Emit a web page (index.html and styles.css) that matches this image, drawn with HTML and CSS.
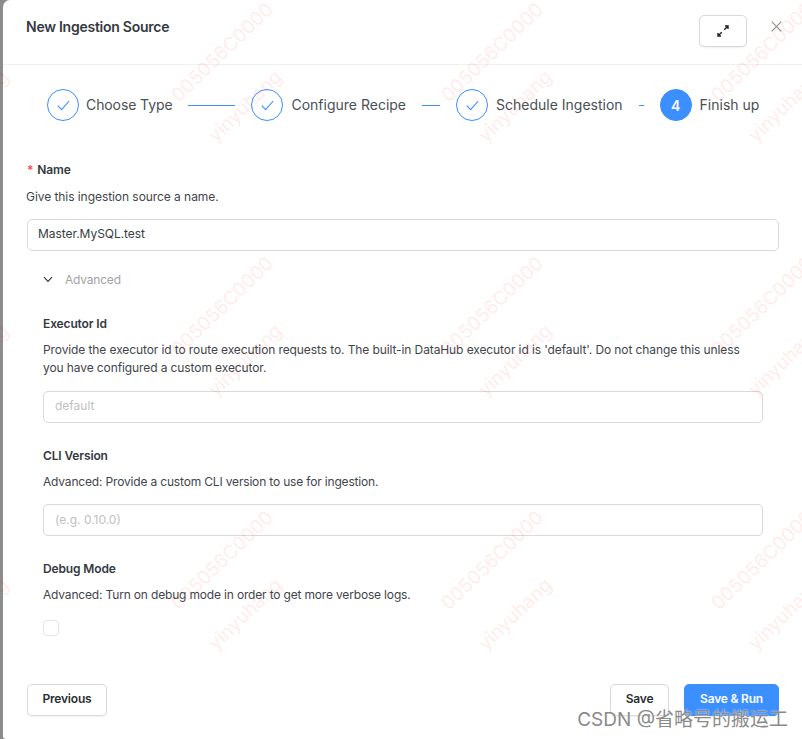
FILE: index.html

```html
<!DOCTYPE html>
<html lang="en">
<head>
  <meta charset="UTF-8">
  <title>New Ingestion Source</title>
  <link rel="stylesheet" href="styles.css">
</head>
<body>
  <div class="modal">
    <div class="modal-header">
      <div class="modal-title">New Ingestion Source</div>
      <button class="expand-btn">
        <svg width="16" height="16" viewBox="0 0 16 16"><path d="M9.2 6.8 12.6 3.4M10 3h3v3M6.8 9.2 3.4 12.6M3 10v3h3" fill="none" stroke="#222" stroke-width="1.4"/></svg>
      </button>
      <svg class="close-icon" width="11" height="11" viewBox="0 0 11 11"><path d="M.7.7 10.3 10.3M10.3.7.7 10.3" stroke="#8c8c8c" stroke-width="1.1"/></svg>
    </div>

    <div class="steps">
      <div class="step">
        <span class="step-circle"><svg width="13" height="11" viewBox="0 0 13 11"><path d="M.8 5.6 4.6 9.6 12.2 1" fill="none" stroke="#3b8fff" stroke-width="1.1"/></svg></span>
        <span class="step-label">Choose Type</span>
      </div>
      <div class="step-line line-1"></div>
      <div class="step">
        <span class="step-circle"><svg width="13" height="11" viewBox="0 0 13 11"><path d="M.8 5.6 4.6 9.6 12.2 1" fill="none" stroke="#3b8fff" stroke-width="1.1"/></svg></span>
        <span class="step-label">Configure Recipe</span>
      </div>
      <div class="step-line line-2"></div>
      <div class="step">
        <span class="step-circle"><svg width="13" height="11" viewBox="0 0 13 11"><path d="M.8 5.6 4.6 9.6 12.2 1" fill="none" stroke="#3b8fff" stroke-width="1.1"/></svg></span>
        <span class="step-label">Schedule Ingestion</span>
      </div>
      <div class="step-line line-3"></div>
      <div class="step">
        <span class="step-circle current">4</span>
        <span class="step-label">Finish up</span>
      </div>
    </div>

    <div class="form">
      <div class="label"><span class="required">*</span>Name</div>
      <div class="help name-help">Give this ingestion source a name.</div>
      <div class="input name-input">Master.MySQL.test</div>

      <div class="advanced-toggle">
        <svg width="10" height="7" viewBox="0 0 10 7"><path d="M1 1.2 5 5.4 9 1.2" fill="none" stroke="#333" stroke-width="1.1"/></svg>
        <span>Advanced</span>
      </div>

      <div class="advanced">
        <div class="label">Executor Id</div>
        <div class="help">Provide the executor id to route execution requests to. The built-in DataHub executor id is 'default'. Do not change this unless you have configured a custom executor.</div>
        <div class="input placeholder">default</div>

        <div class="label">CLI Version</div>
        <div class="help narrow">Advanced: Provide a custom CLI version to use for ingestion.</div>
        <div class="input placeholder cli-input">(e.g. 0.10.0)</div>

        <div class="label">Debug Mode</div>
        <div class="help narrow">Advanced: Turn on debug mode in order to get more verbose logs.</div>
        <div class="checkbox"></div>
      </div>
    </div>

    <div class="modal-footer">
      <button class="btn prev-btn">Previous</button>
      <button class="btn save-btn">Save</button>
      <button class="btn primary">Save &amp; Run</button>
    </div>
  </div>

  <svg class="watermark" width="802" height="739">
    <g>
      <text transform="translate(179 103) rotate(-44)">005056C0000</text>
      <text transform="translate(449 103) rotate(-44)">005056C0000</text>
      <text transform="translate(719 103) rotate(-44)">005056C0000</text>
      <text transform="translate(179 357) rotate(-44)">005056C0000</text>
      <text transform="translate(449 357) rotate(-44)">005056C0000</text>
      <text transform="translate(719 357) rotate(-44)">005056C0000</text>
      <text transform="translate(179 611) rotate(-44)">005056C0000</text>
      <text transform="translate(449 611) rotate(-44)">005056C0000</text>
      <text transform="translate(719 611) rotate(-44)">005056C0000</text>
    </g>
    <g>
      <text transform="translate(-57 143) rotate(-44)">yinyuhang</text>
      <text transform="translate(216 143) rotate(-44)">yinyuhang</text>
      <text transform="translate(486 143) rotate(-44)">yinyuhang</text>
      <text transform="translate(756 143) rotate(-44)">yinyuhang</text>
      <text transform="translate(-57 397) rotate(-44)">yinyuhang</text>
      <text transform="translate(216 397) rotate(-44)">yinyuhang</text>
      <text transform="translate(486 397) rotate(-44)">yinyuhang</text>
      <text transform="translate(756 397) rotate(-44)">yinyuhang</text>
      <text transform="translate(-57 651) rotate(-44)">yinyuhang</text>
      <text transform="translate(216 651) rotate(-44)">yinyuhang</text>
      <text transform="translate(486 651) rotate(-44)">yinyuhang</text>
      <text transform="translate(756 651) rotate(-44)">yinyuhang</text>
    </g>
  </svg>
  <div class="csdn-mark">CSDN @省略号的搬运工</div>
</body>
</html>
```

FILE: styles.css

```css
* {
  box-sizing: border-box;
}
html, body {
  height: 100%;
}
body {
  margin: 0;
  background: #8c8c8c;
  color: #373d44;
  font-family: Inter, "Noto Sans CJK SC", sans-serif;
  font-size: 12px;
  overflow: hidden;
}
.modal {
  display: flex;
  flex-direction: column;
  height: 739px;
  margin-left: 3px;
  padding-bottom: 23px;
  background: #fff;
  border-radius: 7px 0 0 3px;
}
.modal-header {
  display: flex;
  align-items: center;
  height: 65px;
  padding: 0 20px 0 23px;
  border-bottom: 1px solid #f0f0f0;
}
.modal-title {
  flex: 1;
  margin-top: -12px;
  font-size: 14px;
  font-weight: 600;
  letter-spacing: -0.25px;
  color: #33393f;
}
.expand-btn {
  display: flex;
  align-items: center;
  justify-content: center;
  width: 48px;
  height: 32px;
  margin: -3px 24px 0 0;
  background: #fff;
  border: 1px solid #d9d9d9;
  border-radius: 5px;
  box-shadow: 0 1px 2px rgba(0, 0, 0, 0.06);
}
.close-icon {
  margin-top: -11px;
}

.steps {
  display: flex;
  align-items: center;
  height: 32px;
  margin: 24px 0 0 44px;
}
.step {
  display: flex;
  align-items: center;
  gap: 8px;
}
.step:first-child {
  gap: 7px;
  letter-spacing: -0.1px;
}
.step-circle {
  display: flex;
  align-items: center;
  justify-content: center;
  width: 32px;
  height: 32px;
  border: 1px solid #3b8fff;
  border-radius: 50%;
}
.step-circle.current {
  background: #3b8fff;
  color: #fff;
  font-size: 14px;
  font-weight: 600;
}
.step-label {
  margin-top: -2px;
  font-size: 14px;
  color: #4a4f55;
  white-space: nowrap;
}
.step-line {
  height: 1px;
  margin: 0 16px;
  background: #3b8fff;
}
.line-1 {
  width: 47px;
}
.line-2 {
  width: 18px;
}
.line-3 {
  width: 5px;
}

.form {
  margin: 0 23px 0 24px;
  padding-top: 40px;
}
.label {
  height: 18px;
  line-height: 18px;
  font-size: 12px;
  font-weight: 600;
  letter-spacing: -0.13px;
  color: #33393f;
}
.required {
  margin-right: 4px;
  color: #ff4d4f;
}
.help {
  margin-top: 8px;
  line-height: 18px;
  font-size: 12px;
  letter-spacing: -0.1px;
  color: #3f454b;
}
.help.narrow {
  letter-spacing: -0.17px;
}
.name-help {
  margin: 9px 0 0 -1px;
  letter-spacing: -0.06px;
}
.input {
  display: flex;
  align-items: center;
  height: 32px;
  margin-top: 14px;
  padding: 0 11px 3px;
  background: #fff;
  border: 1px solid #d9d9d9;
  border-radius: 5px;
  font-size: 12px;
}
.name-input {
  margin-top: 13px;
  padding-left: 10px;
  letter-spacing: -0.05px;
}
.placeholder {
  color: #bfbfbf;
}
.advanced-toggle {
  display: flex;
  align-items: center;
  gap: 12px;
  height: 18px;
  margin: 19px 0 0 16px;
  color: #a3a3a3;
  letter-spacing: -0.2px;
}
.advanced {
  padding: 27px 16px 0;
}
.advanced .input {
  margin-bottom: 24px;
}
.advanced .cli-input {
  margin-top: 13px;
  padding-bottom: 1px;
}
.checkbox {
  width: 16px;
  height: 16px;
  margin-top: 16px;
  background: #fff;
  border: 1px solid #e4e4e4;
  border-radius: 4px;
}

.modal-footer {
  display: flex;
  align-items: center;
  gap: 15px;
  margin: auto 23px 0 24px;
}
.btn {
  height: 32px;
  padding: 0 0 3px;
  background: #fff;
  border: 1px solid #d9d9d9;
  border-radius: 5px;
  box-shadow: 0 1px 2px rgba(0, 0, 0, 0.06);
  color: #2b2f33;
  font-family: inherit;
  font-size: 12px;
  font-weight: 600;
  letter-spacing: -0.2px;
}
.prev-btn {
  width: 80px;
  margin-right: auto;
}
.save-btn {
  width: 59px;
}
.primary {
  width: 95px;
  background: #3b8fff;
  border-color: #3b8fff;
  color: #fff;
}

/* overlays on top of the page */
.watermark {
  position: absolute;
  top: 0;
  left: 0;
  pointer-events: none;
}
.watermark text {
  font-family: Inter, sans-serif;
  font-size: 19px;
  fill: #ff0000;
  opacity: 0.07;
}
.csdn-mark {
  position: absolute;
  right: 14px;
  bottom: 8px;
  font-size: 19px;
  color: #8a8a8a;
  text-shadow: 0 0 2px #fff;
  white-space: nowrap;
}
```
